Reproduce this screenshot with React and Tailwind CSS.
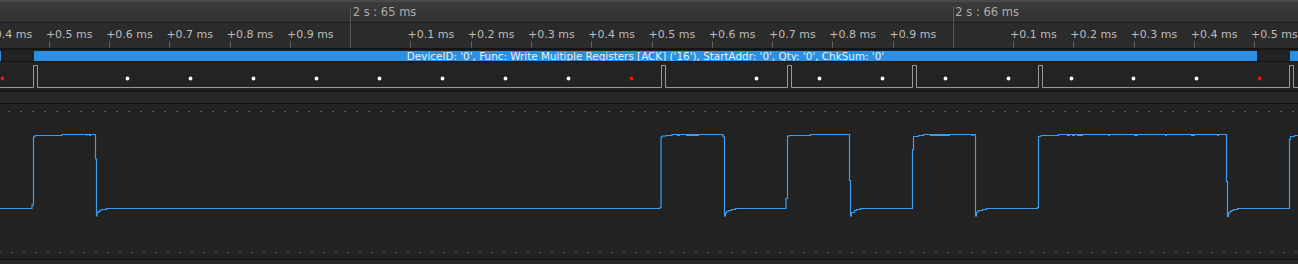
import React from 'react'

const MAJOR_X = 350.7
const STEP = 60.26

const ticks = []
for (let k = -6; k <= 15; k++) {
  if (k === 0 || k === 10) continue
  const n = k < 0 ? 10 + k : k > 10 ? k - 10 : k
  ticks.push({ x: MAJOR_X + STEP * k, label: `+0.${n} ms` })
}

const majors = [
  { x: MAJOR_X, label: '2 s : 65 ms' },
  { x: MAJOR_X + STEP * 10, label: '2 s : 66 ms' },
]

const pulses = [
  [33.5, 37.5],
  [661.5, 665.5],
  [787.5, 791.5],
  [912.5, 916.5],
  [1038.5, 1042.5],
  [1289.5, 1293.5],
]

const whiteDots = [127, 190, 253, 316, 379, 442, 505, 568, 756, 819, 882, 945, 1008, 1071, 1133, 1196]
const redDots = [2, 631, 1259]

function digitalPath() {
  let d = 'M0 87.5'
  pulses.forEach(([a, b]) => {
    d += ` H${a} V65.5 H${b} V87.5`
  })
  return d + ' H1298'
}

const wave =
  'M0 208.5 H32 V205 H33.5 V137 H34.5 V136 H35.5 V135.5 H62 V134.5 H95.5 V159 H96.5 V216 H97 V212.5 H98.5 V211.5 H100 V210 H102.5 V209.5 H106.5 V208.5 ' +
  'H660 V207.5 H661 V137 H662.5 V136 H666.5 V135.5 H672 V134.5 H723 V137 H724.5 V216 H725.5 V213 H726.5 V211.5 H728.5 V210.5 H731.5 V209.5 H735.5 V208.5 ' +
  'H786 V198.5 H787.5 V136 H789.5 V135.5 H810.5 V134.5 H849.5 V180.5 H850.5 V216 H851.5 V212.5 H854.5 V210.5 H856.5 V209.5 H860.5 V208.5 ' +
  'H912.5 V149.5 H913.5 V136.5 H918.5 V135.5 H923.5 V134.5 H972 V135.5 H973.5 V134.5 H975.5 V216 H976.5 V212.5 H977.5 V211 H979.5 V210.5 H982.5 V209.5 H986.5 V208.5 ' +
  'H1037.5 V207.5 H1038.5 V136.5 H1040 V136 H1041.5 V135.5 H1058.5 V134.5 H1226.5 V181.5 H1227.5 V216.5 H1228.5 V213 H1230 V211.5 H1231.5 V210.5 H1233.5 V209.5 H1237.5 V208.5 ' +
  'H1289.5 V139.5 H1290.5 V136.5 H1294.5 V135.5 H1298'

// little blips hanging off the top of the pulses
const blips = [
  [55, 56], [59, 60], [86, 87], [89, 91],
  [677, 680], [686, 699], [722, 723],
  [930, 934], [935, 939], [934, 950],
  [1067, 1070], [1072, 1075], [1077, 1083], [1108, 1110], [1134, 1138], [1165, 1167], [1191, 1195], [1217, 1219],
]

export default function App() {
  return (
    <div className="w-full h-[264px] overflow-hidden bg-[#222222] font-['DejaVu_Sans',sans-serif] select-none">
      {/* time axis */}
      <div className="relative">
        <div className="h-[22px] border-t-2 border-[#4a4a4a] bg-linear-to-b from-[#3c3c3c] to-[#303030]" />
        <div className="h-px bg-[#1b1b1b]" />
        <div className="h-[25px] bg-[#2b2b2b]" />
        {majors.map(m => (
          <React.Fragment key={m.label}>
            <div
              className="absolute top-[7px] h-[41px] w-px bg-[#585858]"
              style={{ left: Math.floor(m.x) }}
            />
            <span
              className="absolute top-[7px] text-[11.5px] leading-[11.5px] text-[#acacac] whitespace-nowrap"
              style={{ left: m.x + 2 }}
            >
              {m.label}
            </span>
          </React.Fragment>
        ))}
        {ticks.map(t => (
          <React.Fragment key={t.x}>
            <div
              className="absolute top-[41px] h-[7px] w-px bg-[#5c5c5c]"
              style={{ left: Math.floor(t.x) }}
            />
            <span
              className="absolute top-[29px] text-[11px] leading-[11px] text-[#bdbdbd] whitespace-nowrap"
              style={{ left: t.x - 3.5 }}
            >
              {t.label}
            </span>
          </React.Fragment>
        ))}
      </div>
      <div className="h-[2px] bg-[#161616]" />

      {/* protocol decode row */}
      <div className="h-[11px] pt-px bg-[#222222] flex">
        <div className="w-[1px] h-[10px] bg-[#2d8fe2]" />
        <div className="w-[33px]" />
        <div className="w-[1223px] h-[10px] bg-[#2d8fe2] flex items-center justify-center text-[10.4px] leading-[10px] text-[#e8f0fa] whitespace-nowrap overflow-hidden">
          DeviceID: '0', Func: Write Multiple Registers [ACK] ('16'), StartAddr: '0', Qty: '0', ChkSum: '0'
        </div>
        <div className="w-[33px]" />
        <div className="flex-1 h-[10px] bg-[#2d8fe2]" />
      </div>
      <div className="h-px bg-[#151515]" />

      {/* digital channel */}
      <div className="h-[28px] bg-[#232323]">
        <svg width="1298" height="28" viewBox="0 62 1298 28" className="block">
          <path d={digitalPath()} fill="none" stroke="#9a9a9a" strokeWidth="1" />
          {whiteDots.map(x => (
            <circle key={x} cx={x + 0.5} cy="78.5" r="1.9" fill="#ffffff" />
          ))}
          {redDots.map(x => (
            <circle key={x} cx={x + 0.5} cy="78.5" r="1.9" fill="#ff1010" />
          ))}
        </svg>
      </div>
      <div className="h-[2px] bg-[#171717]" />
      <div className="h-[11px] bg-[#262626]" />
      <div className="h-px bg-[#111111]" />

      {/* analog channel */}
      <div className="h-[155px] bg-[#222222]">
        <svg width="1298" height="155" viewBox="0 104 1298 155" className="block">
          <line x1="0" y1="111.5" x2="1298" y2="111.5" stroke="#5a5a5a" strokeWidth="1" strokeDasharray="2 10" strokeDashoffset="-8" />
          <line x1="0" y1="252.5" x2="1298" y2="252.5" stroke="#5a5a5a" strokeWidth="1" strokeDasharray="2 10" strokeDashoffset="1" />
          <path d={wave} fill="none" stroke="#3d9df5" strokeWidth="1.2" />
          {blips.map(([a, b]) => (
            <line key={a + '-' + b} x1={a} y1="135.5" x2={b} y2="135.5" stroke="#3d9df5" strokeWidth="1" />
          ))}
        </svg>
      </div>
      <div className="h-px bg-[#111111]" />
      <div className="h-[4px] bg-[#272727]" />
    </div>
  )
}
